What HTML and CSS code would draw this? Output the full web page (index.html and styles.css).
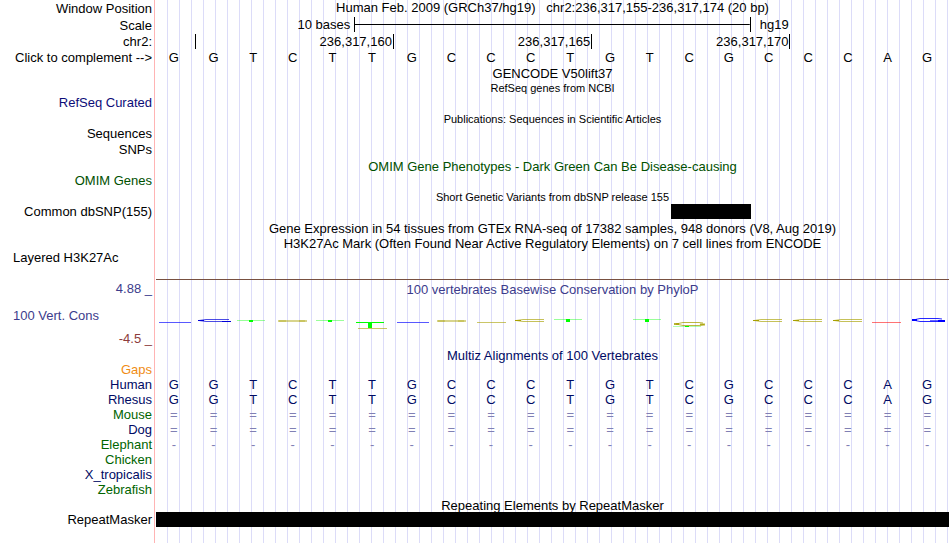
FILE: index.html
```
<!DOCTYPE html>
<html lang="en">
    <head>
        <meta charset="utf-8">
        <title>Human chr2:236,317,155-236,317,174</title>
        <link rel="stylesheet" href="styles.css">
    </head>
    <body>
        <div id="browser">
            <!-- position and ruler -->
            <div class="row tall">
                <div class="label">Window Position</div>
                <div class="data position">Human Feb. 2009 (GRCh37/hg19)&nbsp;&nbsp; chr2:236,317,155-236,317,174 (20 bp)</div>
            </div>
            <div class="row tall">
                <div class="label">Scale</div>
                <div class="data scale">
                    <span class="scaleSize">10 bases</span>
                    <span class="scaleBar"></span>
                    <span class="scaleDb">hg19</span>
                </div>
            </div>
            <div class="row ruler">
                <div class="label">chr2:</div>
                <div class="data ticks">
                    <span></span><span>236,317,160</span><span>236,317,165</span><span>236,317,170</span>
                </div>
            </div>
            <div class="row">
                <div class="label">Click to complement --&gt;</div>
                <div class="data bases"><span>G</span><span>G</span><span>T</span><span>C</span><span>T</span><span>T</span><span>G</span><span>C</span><span>C</span><span>C</span><span>T</span><span>G</span><span>T</span><span>C</span><span>G</span><span>C</span><span>C</span><span>C</span><span>A</span><span>G</span></div>
            </div>

            <!-- genes -->
            <div class="row">
                <div class="label"></div>
                <div class="data title">GENCODE V50lift37</div>
            </div>
            <div class="row">
                <div class="label"></div>
                <div class="data title small">RefSeq genes from NCBI</div>
            </div>
            <div class="row refseq">
                <div class="label">RefSeq Curated</div>
                <div class="data"></div>
            </div>
            <div class="row spaced">
                <div class="label"></div>
                <div class="data title small">Publications: Sequences in Scientific Articles</div>
            </div>
            <div class="row">
                <div class="label">Sequences</div>
                <div class="data"></div>
            </div>
            <div class="row spaced">
                <div class="label">SNPs</div>
                <div class="data"></div>
            </div>
            <div class="row omim spaced">
                <div class="label"></div>
                <div class="data title">OMIM Gene Phenotypes - Dark Green Can Be Disease-causing</div>
            </div>
            <div class="row omim">
                <div class="label">OMIM Genes</div>
                <div class="data"></div>
            </div>

            <!-- variants -->
            <div class="row spaced">
                <div class="label"></div>
                <div class="data title small">Short Genetic Variants from dbSNP release 155</div>
            </div>
            <div class="row">
                <div class="label">Common dbSNP(155)</div>
                <div class="data"><div class="item snp"></div></div>
            </div>

            <!-- expression and regulation -->
            <div class="row spaced">
                <div class="label"></div>
                <div class="data title">Gene Expression in 54 tissues from GTEx RNA-seq of 17382 samples, 948 donors (V8, Aug 2019)</div>
            </div>
            <div class="row">
                <div class="label"></div>
                <div class="data title">H3K27Ac Mark (Often Found Near Active Regulatory Elements) on 7 cell lines from ENCODE</div>
            </div>
            <div class="row histone">
                <div class="label left">Layered H3K27Ac</div>
                <div class="data"></div>
            </div>

            <!-- conservation -->
            <div class="row phylop maximum">
                <div class="label">4.88 _</div>
                <div class="data">100 vertebrates Basewise Conservation by PhyloP</div>
            </div>
            <div class="row phylop">
                <div class="label left middle">100 Vert. Cons</div>
                <div class="data">
                    <svg class="wiggle" viewBox="156 299 793 32" preserveAspectRatio="none" aria-hidden="true">
                        <defs>
                            <g id="thinT">
                                <path d="M0 .5H28" stroke="#00ff00" stroke-opacity=".4"/>
                                <path d="M12 0H16V2H12Z" fill="#00ff00"/>
                            </g>
                            <g id="flatC" fill="none" stroke="#a8a000">
                                <path d="M0 1H29" stroke-width="2" stroke-opacity=".45"/>
                                <path d="M1 1H8M21 1H27" stroke-width="1" stroke-opacity=".6"/>
                            </g>
                            <g id="openC" fill="none" stroke="#a8a000">
                                <path d="M29 .5H8L1 1.5L8 2.5H29" stroke-opacity=".65"/>
                                <path d="M0 1.5H6" stroke-width="1"/>
                            </g>
                        </defs>
                        <path d="M159 322.5H191" stroke="#0000ff" stroke-opacity=".65"/>
                        <g fill="none" stroke="#0000d8">
                            <path d="M229 319.5H206L199 320.5L206 321.5H230" stroke-opacity=".7"/>
                            <path d="M198 320.5H204M222 321.5H231"/>
                        </g>
                        <use href="#thinT" x="237" y="320"/>
                        <use href="#flatC" x="278" y="320"/>
                        <use href="#thinT" x="316" y="320"/>
                        <path d="M356 322.5H384" stroke="#00ff00"/>
                        <path d="M368 322H372V328H368Z" fill="#00ff00"/>
                        <path d="M358 328.5H387" stroke="#a8a000" stroke-opacity=".6"/>
                        <path d="M397 322.5H429" stroke="#0000ff" stroke-opacity=".65"/>
                        <use href="#flatC" x="437" y="320"/>
                        <path d="M477 322.5H506" stroke="#a8a000" stroke-opacity=".6"/>
                        <use href="#openC" x="515" y="319"/>
                        <use href="#thinT" x="554" y="319"/>
                        <path d="M566 320H570V322H566Z" fill="#00ff00"/>
                        <use href="#thinT" x="633" y="319"/>
                        <path d="M645 320H649V322H645Z" fill="#00ff00"/>
                        <g fill="none" stroke="#a8a000">
                            <path d="M703 323L699 322.5H683L676 324L683 325.5H699L704 324.5" stroke-opacity=".75"/>
                            <path d="M674 324H679M700 324.5H705" stroke-width="2" stroke-opacity=".8"/>
                        </g>
                        <path d="M673 326.5H701" stroke="#00ff00" stroke-opacity=".3"/>
                        <path d="M685 326H689V327H685Z" fill="#00ff00"/>
                        <use href="#openC" x="753" y="319"/>
                        <use href="#openC" x="793" y="319"/>
                        <use href="#openC" x="833" y="319"/>
                        <path d="M872 322.5H901" stroke="#ff0000" stroke-opacity=".55"/>
                        <g fill="none" stroke="#0000ff">
                            <path d="M942 319L938 318.5H920L913 320L920 321.5H942" stroke-opacity=".85"/>
                            <path d="M912 320H917M938 321H945" stroke-width="2"/>
                            <path d="M930 320.5H942" stroke-opacity=".6"/>
                        </g>
                    </svg>
                </div>
            </div>
            <div class="row minimum">
                <div class="label">-4.5 _</div>
                <div class="data"></div>
            </div>

            <!-- alignments -->
            <div class="row align spaced">
                <div class="label"></div>
                <div class="data title">Multiz Alignments of 100 Vertebrates</div>
            </div>
            <div class="row gaps">
                <div class="label">Gaps</div>
                <div class="data"></div>
            </div>
            <div class="row align">
                <div class="label">Human</div>
                <div class="data bases"><span>G</span><span>G</span><span>T</span><span>C</span><span>T</span><span>T</span><span>G</span><span>C</span><span>C</span><span>C</span><span>T</span><span>G</span><span>T</span><span>C</span><span>G</span><span>C</span><span>C</span><span>C</span><span>A</span><span>G</span></div>
            </div>
            <div class="row align">
                <div class="label">Rhesus</div>
                <div class="data bases"><span>G</span><span>G</span><span>T</span><span>C</span><span>T</span><span>T</span><span>G</span><span>C</span><span>C</span><span>C</span><span>T</span><span>G</span><span>T</span><span>C</span><span>G</span><span>C</span><span>C</span><span>C</span><span>A</span><span>G</span></div>
            </div>
            <div class="row alt">
                <div class="label">Mouse</div>
                <div class="data bases missing"><span>=</span><span>=</span><span>=</span><span>=</span><span>=</span><span>=</span><span>=</span><span>=</span><span>=</span><span>=</span><span>=</span><span>=</span><span>=</span><span>=</span><span>=</span><span>=</span><span>=</span><span>=</span><span>=</span><span>=</span></div>
            </div>
            <div class="row align">
                <div class="label">Dog</div>
                <div class="data bases missing"><span>=</span><span>=</span><span>=</span><span>=</span><span>=</span><span>=</span><span>=</span><span>=</span><span>=</span><span>=</span><span>=</span><span>=</span><span>=</span><span>=</span><span>=</span><span>=</span><span>=</span><span>=</span><span>=</span><span>=</span></div>
            </div>
            <div class="row alt">
                <div class="label">Elephant</div>
                <div class="data bases missing"><span>-</span><span>-</span><span>-</span><span>-</span><span>-</span><span>-</span><span>-</span><span>-</span><span>-</span><span>-</span><span>-</span><span>-</span><span>-</span><span>-</span><span>-</span><span>-</span><span>-</span><span>-</span><span>-</span><span>-</span></div>
            </div>
            <div class="row alt">
                <div class="label">Chicken</div>
                <div class="data"></div>
            </div>
            <div class="row align">
                <div class="label">X_tropicalis</div>
                <div class="data"></div>
            </div>
            <div class="row alt">
                <div class="label">Zebrafish</div>
                <div class="data"></div>
            </div>

            <!-- repeats -->
            <div class="row">
                <div class="label"></div>
                <div class="data title">Repeating Elements by RepeatMasker</div>
            </div>
            <div class="row">
                <div class="label">RepeatMasker</div>
                <div class="data"><div class="item"></div></div>
            </div>
        </div>
    </body>
</html>
```
FILE: styles.css
```
body{
    margin: 0;
    background-color: white;
    color: black;
    font-family: "Liberation Sans", Arial, sans-serif;
    font-size: 13px;
    line-height: 15px;
}

#browser{
    box-sizing: border-box;
    min-height: 100vh;
    padding-right: 1px;
    /* pink edge of the label column, then a guide line every 12px */
    background-image:
        linear-gradient(#ffb4b4, #ffb4b4),
        linear-gradient(white, white),
        repeating-linear-gradient(to right, transparent 0 11px, #dcdcf8 11px 12px);
    background-position: 154px 0, 0 0, 156px 0;
    background-size: 1px 100%, 156px 100%, 100% 100%;
    background-repeat: no-repeat;
}

.row{
    display: grid;
    grid-template-columns: 156px 1fr;
    min-height: 15px;
    white-space: nowrap;
}

.label{
    padding-right: 4px;
    text-align: right;
}

.label.left{
    padding-left: 13px;
    text-align: left;
}

.middle{
    align-self: center;
}

.title{
    padding-top: 2px;
    line-height: 13px;
    text-align: center;
}

.small{
    font-size: 11px;
}

.tall{
    min-height: 17px;
    line-height: 17px;
}

.tall .data{
    line-height: 15px;
}

.position{
    text-align: center;
}

.spaced{
    padding-top: 1px;
}

/* ruler */
.scale{
    display: grid;
    grid-template-columns: 25% 50% 25%;
}

.scaleSize{
    padding-right: 4px;
    text-align: right;
}

.scaleBar{
    height: 15px;
    border: solid black;
    border-width: 0 1px;
    background: linear-gradient(black, black) center / 100% 1px no-repeat;
}

.scaleDb{
    padding-left: 9px;
}

.ruler{
    min-height: 16px;
    line-height: 16px;
}

.ticks{
    display: grid;
    grid-template-columns: 5% 25% 25% 25%;
}

.ticks span{
    height: 15px;
    padding-right: 1px;
    border-right: 1px solid black;
    text-align: right;
}

.bases{
    display: grid;
    grid-template-columns: repeat(20, 1fr);
    margin-left: -2px;
    padding-right: 2px;
    text-align: center;
}

.item{
    height: 15px;
    background-color: black;
}

.snp{
    width: 10%;
    margin-left: 65%;
}

/* track colours */
.refseq{
    color: #0c0c78;
}

.omim{
    color: #005000;
}

.histone{
    min-height: 29px;
}

.phylop{
    color: #3c3c8c;
}

.maximum{
    line-height: 19px;
}

.maximum .data{
    border-top: 1px solid #785040;
    text-align: center;
}

.wiggle{
    display: block;
    width: 100%;
    height: 32px;
}

.minimum{
    color: #8c3c3c;
}

.gaps{
    color: #f08c14;
}

.align{
    color: #000a64;
}

.alt{
    color: #006400;
}

.alt .missing,
.align .missing{
    color: #8080b4;
}
```
